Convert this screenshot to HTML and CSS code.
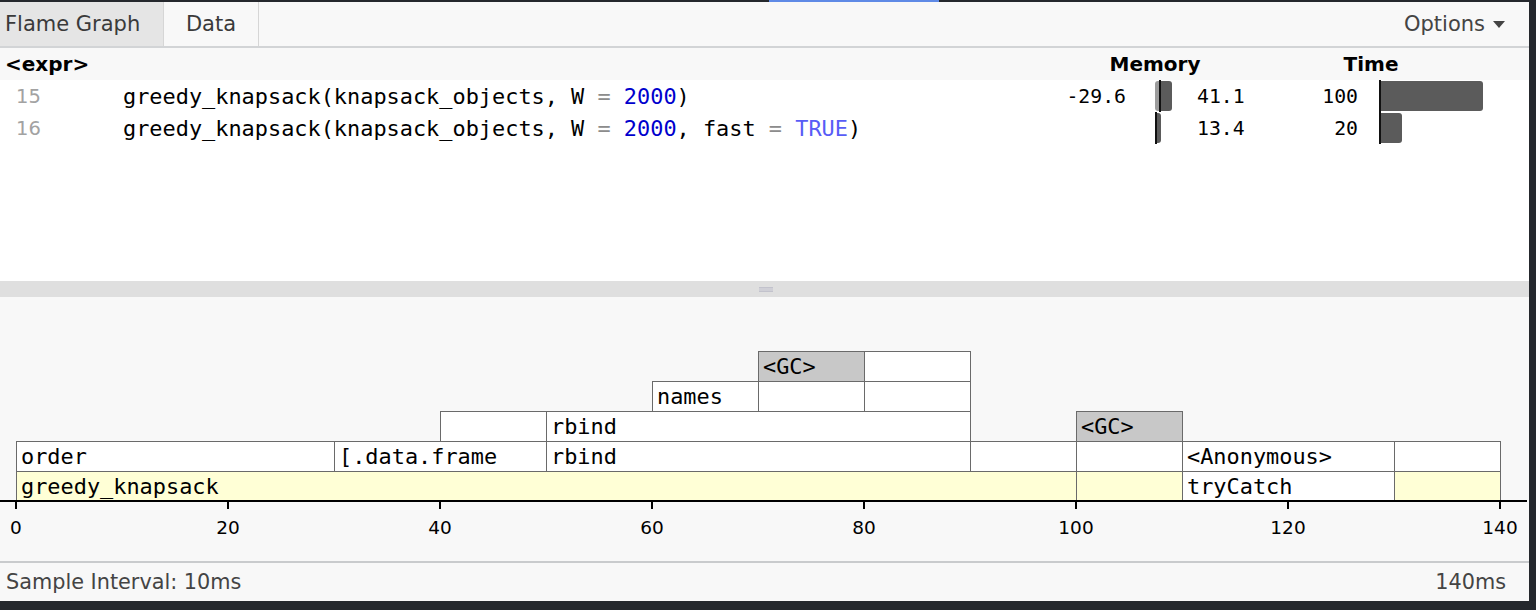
FILE: index.html
```html
<!DOCTYPE html>
<html>
<head>
<meta charset="utf-8">
<link rel="stylesheet" href="styles.css">
</head>
<body>
<div class="topstrip"><div class="topstrip-accent"></div></div>
<div class="app">
  <div class="tabbar">
    <div class="tab tab-active">Flame Graph</div>
    <div class="tab tab-data">Data</div>
    <div class="tab-spacer"></div>
    <div class="options">Options <span class="caret"></span></div>
  </div>
  <div class="profile">
    <div class="phead">
      <div class="phead-expr">&lt;expr&gt;</div>
      <div class="phead-mem">Memory</div>
      <div class="phead-gap"></div>
      <div class="phead-time">Time</div>
    </div>
    <div class="prow">
      <div class="ln">15</div>
      <div class="code">greedy_knapsack(knapsack_objects, W <span class="op">=</span> <span class="num">2000</span>)</div>
      <div class="memneg">-29.6</div>
      <div class="membar"><span class="mneg" style="width:4px"></span><span class="maxis"></span><span class="mpos" style="width:11px"></span></div>
      <div class="mempos">41.1</div>
      <div class="timeval">100</div>
      <div class="tgap"></div>
      <div class="timebar"><span class="taxis"></span><span class="tbar" style="width:102px"></span></div>
    </div>
    <div class="prow">
      <div class="ln">16</div>
      <div class="code">greedy_knapsack(knapsack_objects, W <span class="op">=</span> <span class="num">2000</span>, fast <span class="op">=</span> <span class="kw">TRUE</span>)</div>
      <div class="memneg"></div>
      <div class="membar"><span class="mneg" style="width:0px"></span><span class="maxis"></span><span class="mpos" style="width:4px"></span></div>
      <div class="mempos">13.4</div>
      <div class="timeval">20</div>
      <div class="tgap"></div>
      <div class="timebar"><span class="taxis"></span><span class="tbar" style="width:21px"></span></div>
    </div>
  </div>
  <div class="splitter"><div class="grip"></div></div>
  <div class="flame">
    <svg class="flame-svg" width="1529" height="264" viewBox="0 0 1529 264">
      <!-- row 5 -->
      <rect class="fr gc" x="758.5" y="54.5" width="106" height="30"/>
      <text class="ft" x="763" y="77">&lt;GC&gt;</text>
      <rect class="fr" x="864.5" y="54.5" width="106" height="30"/>
      <!-- row 4 -->
      <rect class="fr" x="652.5" y="84.5" width="106" height="30"/>
      <text class="ft" x="657" y="107">names</text>
      <rect class="fr" x="758.5" y="84.5" width="106" height="30"/>
      <rect class="fr" x="864.5" y="84.5" width="106" height="30"/>
      <!-- row 3 -->
      <rect class="fr" x="440.5" y="114.5" width="106" height="30"/>
      <rect class="fr" x="546.5" y="114.5" width="424" height="30"/>
      <text class="ft" x="551" y="137">rbind</text>
      <rect class="fr gc" x="1076.5" y="114.5" width="106" height="30"/>
      <text class="ft" x="1081" y="137">&lt;GC&gt;</text>
      <!-- row 2 -->
      <rect class="fr" x="16.5" y="144.5" width="318" height="30"/>
      <text class="ft" x="21" y="167">order</text>
      <rect class="fr" x="334.5" y="144.5" width="212" height="30"/>
      <text class="ft" x="339" y="167">[.data.frame</text>
      <rect class="fr" x="546.5" y="144.5" width="424" height="30"/>
      <text class="ft" x="551" y="167">rbind</text>
      <rect class="fr" x="970.5" y="144.5" width="106" height="30"/>
      <rect class="fr" x="1076.5" y="144.5" width="106" height="30"/>
      <rect class="fr" x="1182.5" y="144.5" width="212" height="30"/>
      <text class="ft" x="1187" y="167">&lt;Anonymous&gt;</text>
      <rect class="fr" x="1394.5" y="144.5" width="106" height="30"/>
      <!-- row 1 -->
      <rect class="fr yl" x="16.5" y="174.5" width="1060" height="30"/>
      <text class="ft" x="21" y="197">greedy_knapsack</text>
      <rect class="fr yl" x="1076.5" y="174.5" width="106" height="30"/>
      <rect class="fr" x="1182.5" y="174.5" width="212" height="30"/>
      <text class="ft" x="1187" y="197">tryCatch</text>
      <rect class="fr yl" x="1394.5" y="174.5" width="106" height="30"/>
      <!-- axis -->
      <line class="axis" x1="0" y1="204" x2="1527" y2="204"/>
      <line class="tick" x1="16" y1="204" x2="16" y2="212"/>
      <line class="tick" x1="228" y1="204" x2="228" y2="212"/>
      <line class="tick" x1="440" y1="204" x2="440" y2="212"/>
      <line class="tick" x1="652" y1="204" x2="652" y2="212"/>
      <line class="tick" x1="864" y1="204" x2="864" y2="212"/>
      <line class="tick" x1="1076" y1="204" x2="1076" y2="212"/>
      <line class="tick" x1="1288" y1="204" x2="1288" y2="212"/>
      <line class="tick" x1="1500" y1="204" x2="1500" y2="212"/>
      <text class="at" x="16" y="237">0</text>
      <text class="at" x="228" y="237">20</text>
      <text class="at" x="440" y="237">40</text>
      <text class="at" x="652" y="237">60</text>
      <text class="at" x="864" y="237">80</text>
      <text class="at" x="1076" y="237">100</text>
      <text class="at" x="1288" y="237">120</text>
      <text class="at" x="1500" y="237">140</text>
    </svg>
  </div>
  <div class="footer">
    <div class="footer-left">Sample Interval: 10ms</div>
    <div class="footer-right">140ms</div>
  </div>
</div>
</body>
</html>
```
FILE: styles.css
```css
html, body {
  margin: 0;
  padding: 0;
}
body {
  background: #25282d;
  width: 1536px;
  height: 610px;
  overflow: hidden;
  font-family: "DejaVu Sans", sans-serif;
}
.topstrip {
  height: 2px;
  display: flex;
}
.topstrip-accent {
  margin-left: 769px;
  width: 170px;
  height: 2px;
  background: #5f8ae6;
}
.app {
  width: 1529px;
  height: 599px;
  background: #f8f8f8;
  display: flex;
  flex-direction: column;
}
.tabbar {
  height: 44px;
  border-bottom: 2px solid #d2d4d6;
  display: flex;
  align-items: stretch;
  font-size: 21px;
  color: #3a3a3a;
}
.tab {
  display: flex;
  align-items: center;
  justify-content: center;
  border-right: 1px solid #d6d6d6;
  padding-bottom: 1px;
}
.tab-active {
  width: 163px;
  background: #e5e5e5;
  justify-content: flex-start;
  padding-left: 5px;
  box-sizing: border-box;
  width: 164px;
}
.tab-data {
  width: 94px;
}
.tab-spacer {
  flex: 1;
}
.options {
  display: flex;
  align-items: center;
  padding-right: 24px;
  padding-bottom: 1px;
  color: #444;
}
.caret {
  display: inline-block;
  width: 0;
  height: 0;
  margin-left: 8px;
  margin-top: 2px;
  border-left: 6.5px solid transparent;
  border-right: 6.5px solid transparent;
  border-top: 7px solid #444;
}
.profile {
  height: 233px;
  background: #ffffff;
  display: flex;
  flex-direction: column;
}
.phead {
  height: 32px;
  background: #f8f8f8;
  display: flex;
  align-items: center;
  font-weight: bold;
  font-size: 20px;
  color: #000;
}
.phead-expr {
  flex: 1;
  padding-left: 5px;
}
.phead-mem {
  width: 110px;
  text-align: center;
}
.phead-gap {
  width: 106px;
}
.phead-time {
  width: 110px;
  text-align: center;
  margin-right: 103px;
}
.prow {
  height: 32px;
  display: grid;
  grid-template-columns: 123px 917px 86px 71px 93px 68px 21px 150px;
  align-items: center;
}
.ln {
  padding-left: 16px;
  color: #a2a2a2;
  font-size: 19.5px;
}
.code {
  font-family: "DejaVu Sans Mono", monospace;
  font-size: 21.9px;
  color: #000;
  white-space: pre;
}
.op { color: #8c8c8c; }
.num { color: #0000cd; }
.kw { color: #585cf6; }
.memneg, .mempos, .timeval {
  font-family: "DejaVu Sans Mono", monospace;
  font-size: 19.8px;
  color: #000;
  white-space: pre;
}
.memneg, .timeval {
  text-align: right;
}
.membar, .timebar {
  height: 32px;
  display: flex;
  align-items: center;
}
.membar {
  padding-left: 29px;
}
.mneg {
  height: 30px;
  background: #9c9c9c;
  border-radius: 3px 0 0 3px;
}
.maxis, .taxis {
  width: 2px;
  height: 32px;
  background: #111;
}
.mpos, .tbar {
  height: 30px;
  background: #5b5b5b;
  border-radius: 0 3px 3px 0;
}
.splitter {
  height: 16px;
  background: #dfdfdf;
  display: flex;
  align-items: center;
  justify-content: center;
}
.grip {
  width: 14px;
  height: 5px;
  border-top: 1px solid #c2c2cc;
  border-bottom: 1px solid #c2c2cc;
  background: #cfcfd6;
  box-sizing: border-box;
  margin-left: 2px;
}
.flame {
  height: 264px;
  background: #f8f8f8;
}
.flame-svg {
  display: block;
}
.fr {
  fill: #ffffff;
  stroke: #6a6a6a;
  stroke-width: 1;
}
.fr.gc { fill: #c8c8c8; }
.fr.yl { fill: #ffffd6; }
.ft {
  font-family: "DejaVu Sans Mono", monospace;
  font-size: 21.9px;
  fill: #000;
}
.axis {
  stroke: #000;
  stroke-width: 2;
}
.tick {
  stroke: #000;
  stroke-width: 2;
}
.at {
  font-family: "DejaVu Sans", sans-serif;
  font-size: 18.5px;
  fill: #000;
  text-anchor: middle;
}
.footer {
  flex: 1;
  border-top: 2px solid #c9cbcd;
  display: flex;
  align-items: center;
  justify-content: space-between;
  padding: 0 23px 0 6px;
  font-size: 20.8px;
  color: #444;
}
```
